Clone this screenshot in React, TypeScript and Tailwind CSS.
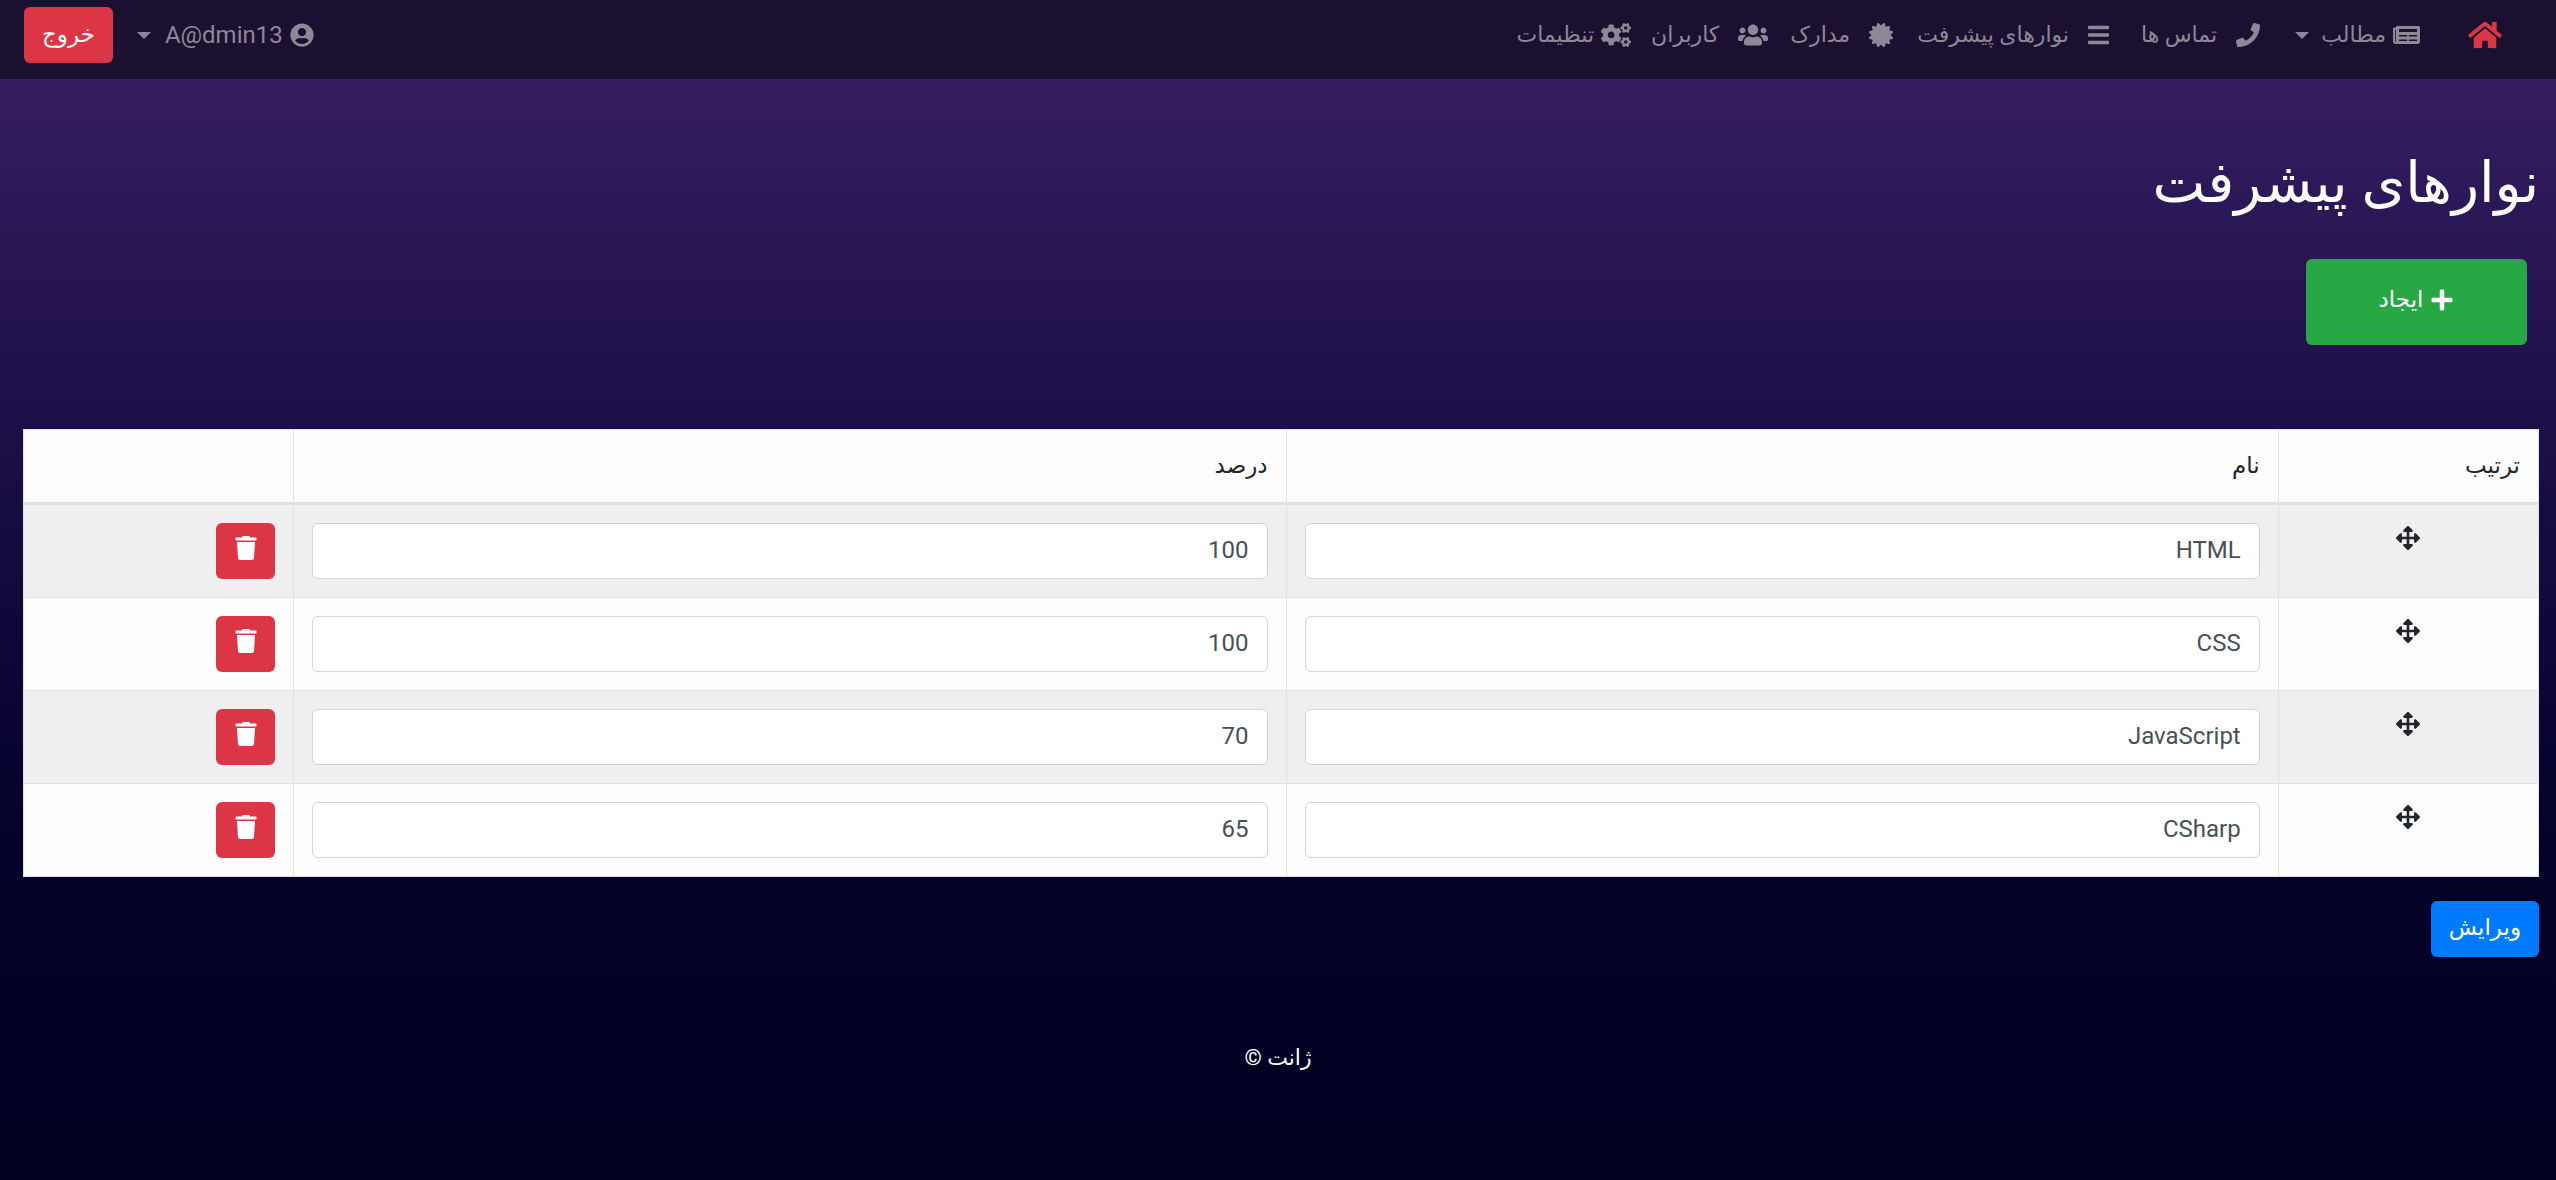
import React, { useState } from "react";
import {
  FaArrowsAlt,
  FaBars,
  FaCertificate,
  FaCogs,
  FaHome,
  FaNewspaper,
  FaPhone,
  FaPlus,
  FaTrash,
  FaUserCircle,
  FaUsers,
} from "react-icons/fa";

type NavItem = {
  label: string;
  icon: React.ReactNode;
  spacing: string;
};

const navItems: NavItem[] = [
  { label: "تماس ها", icon: <FaPhone />, spacing: "gap-[19px] pr-3 pl-5" },
  {
    label: "نوارهای پیشرفت",
    icon: <FaBars className="w-[21px]" />,
    spacing: "gap-[19px] px-3",
  },
  { label: "مدارک", icon: <FaCertificate />, spacing: "gap-[19px] pr-3 pl-2.5" },
  {
    label: "کاربران",
    icon: <FaUsers className="w-[30px]" />,
    spacing: "gap-[19px] pr-3 pl-2",
  },
  { label: "تنظیمات", icon: <FaCogs className="w-[30px]" />, spacing: "gap-[7px] px-3" },
];

const initialBars = [
  { name: "HTML", percent: "100" },
  { name: "CSS", percent: "100" },
  { name: "JavaScript", percent: "70" },
  { name: "CSharp", percent: "65" },
];

const inputClass =
  "block h-14 w-full rounded-md border border-[#ced4da] bg-white px-[18px] pb-0.5 text-right text-2xl text-[#495057]";
const cellClass = "border border-[#dee2e6] p-[18px] align-top";
const headClass =
  "border border-b-3 border-[#dee2e6] p-[18px] text-right text-[23px] leading-9 font-normal";

function Caret() {
  return (
    <span className="border-x-7 border-t-7 border-x-transparent border-t-current" />
  );
}

function NavBar() {
  return (
    <nav className="flex items-center justify-between bg-[#1b102f] pt-[7px] pr-[54px] pb-4 pl-6 text-[22px] leading-9 text-[#8d8797]">
      <div className="flex items-center">
        <a href="#home" aria-label="خانه" className="ml-12 text-[#dc3545]">
          <FaHome className="h-[30px] w-[34px]" />
        </a>
        <button type="button" className="ml-[23px] flex items-center">
          <FaNewspaper className="ml-[7px] h-6 w-[27px]" />
          <span className="ml-3">مطالب</span>
          <Caret />
        </button>
        <ul className="flex items-center">
          {navItems.map((item) => (
            <li key={item.label}>
              <a href="#" className={`flex items-center ${item.spacing}`}>
                <span className="flex items-center text-2xl">{item.icon}</span>
                {item.label}
              </a>
            </li>
          ))}
        </ul>
      </div>
      <div className="flex items-center">
        <button type="button" className="ml-6 flex items-center text-2xl leading-9">
          <FaUserCircle className="ml-[7px]" />
          <span className="ml-3.5" dir="ltr">
            A@dmin13
          </span>
          <Caret />
        </button>
        <button
          type="button"
          className="h-14 rounded-md bg-[#dc3545] px-[18px] text-[23px] text-white"
        >
          خروج
        </button>
      </div>
    </nav>
  );
}

export default function App() {
  const [bars, setBars] = useState(initialBars);

  const update = (index: number, field: "name" | "percent", value: string) =>
    setBars(bars.map((bar, i) => (i === index ? { ...bar, [field]: value } : bar)));

  return (
    <div
      dir="rtl"
      className="min-h-screen bg-linear-to-b from-[#3a2067] via-[#030128] via-75% to-[#000020] font-[Roboto,'DejaVu_Sans',sans-serif] text-white"
    >
      <NavBar />
      <main className="pr-[17px] pl-[23px]">
        <h1 className="mt-[68px] text-[56px] leading-[72px] font-normal">
          نوارهای پیشرفت
        </h1>
        <button
          type="button"
          className="mt-10 mr-3 flex h-[86px] w-[221px] items-center justify-center gap-[7px] rounded-md bg-[#28a745] pb-1 text-[23px]"
        >
          <FaPlus className="text-2xl" />
          ایجاد
        </button>
        <table className="mt-[84px] w-full table-fixed border-collapse bg-[#fdfdfd] text-[#212529]">
          <colgroup>
            <col className="w-[10.35%]" />
            <col className="w-[39.45%]" />
            <col className="w-[39.45%]" />
            <col />
          </colgroup>
          <thead>
            <tr>
              <th className={headClass}>ترتیب</th>
              <th className={headClass}>نام</th>
              <th className={headClass}>درصد</th>
              <th className={headClass} aria-label="حذف" />
            </tr>
          </thead>
          <tbody>
            {bars.map((bar, index) => (
              <tr key={index} className="odd:bg-[#efefef]">
                <td className={cellClass}>
                  <div className="flex cursor-move justify-center pt-[3px] text-2xl">
                    <FaArrowsAlt />
                  </div>
                </td>
                <td className={cellClass}>
                  <input
                    aria-label="نام"
                    className={inputClass}
                    value={bar.name}
                    onChange={(e) => update(index, "name", e.target.value)}
                  />
                </td>
                <td className={cellClass}>
                  <input
                    aria-label="درصد"
                    className={inputClass}
                    value={bar.percent}
                    onChange={(e) => update(index, "percent", e.target.value)}
                  />
                </td>
                <td className={cellClass}>
                  <button
                    type="button"
                    aria-label="حذف"
                    onClick={() => setBars(bars.filter((_, i) => i !== index))}
                    className="flex h-14 w-[59px] items-center justify-center rounded-md bg-[#dc3545] pb-1.5 text-2xl text-white"
                  >
                    <FaTrash />
                  </button>
                </td>
              </tr>
            ))}
          </tbody>
        </table>
        <button
          type="button"
          className="mt-6 h-14 rounded-md bg-[#007bff] px-[18px] pb-0.5 text-[23px]"
        >
          ویرایش
        </button>
      </main>
      <footer className="mt-[83px] pb-12 text-center text-[22px] leading-9">ژانت ©</footer>
    </div>
  );
}
